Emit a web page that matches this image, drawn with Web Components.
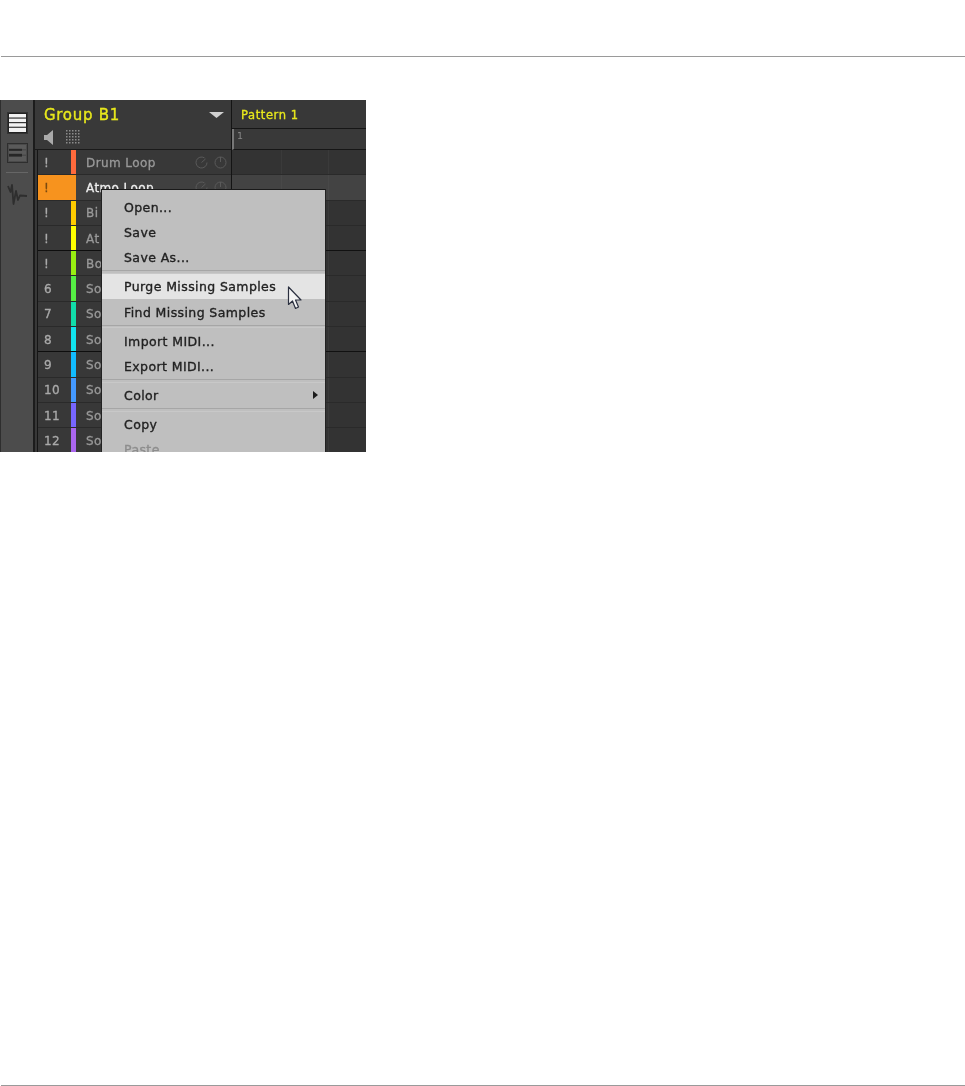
<!DOCTYPE html>
<html lang="en"><head><meta charset="utf-8"><title>Sound context menu</title>
<style>
html,body{margin:0;height:100%;background:#fff}
body{height:1086px;display:flex;flex-direction:column;overflow:hidden;font-family:"DejaVu Sans","Liberation Sans",sans-serif}
doc-rule.top{margin-top:56px}
app-window{margin-top:43px}
doc-rule.bottom{margin-top:auto;margin-bottom:0}
</style></head><body>
<doc-rule class="top"></doc-rule>
<app-window></app-window>
<doc-rule class="bottom"></doc-rule>
<template id="t-window">
<style>
:host{display:flex;width:366px;height:352px;overflow:hidden;position:relative;background:#333;flex:none;filter:blur(.35px)}
.rail{flex:none;background:#4c4c4c;border-left:1px solid #2e2e2e;border-right:2px solid #1c1c1c;display:flex;flex-direction:column;align-items:center;width:32px}
.rail svg{display:block}
.rail .i1{margin-top:12px}.rail .i2{margin-top:9px}
.rail hr{width:22px;height:1px;border:0;background:#666;margin:9px 0 10px}
.list{width:196px;flex:none;background:#383838;border-right:1px solid #141414;display:flex;flex-direction:column}
.lhead{height:49px;flex:none;display:flex;flex-direction:column;background:#393939;border-bottom:1px solid #1a1a1a}
.title{height:27px;display:flex;align-items:center;justify-content:space-between;padding:3px 7px 0 9px;box-sizing:border-box;color:#e8e81c;font-size:15px;letter-spacing:.7px;-webkit-text-stroke:.35px #e8e81c}
.title svg{margin-top:-1px}
.tools{display:flex;align-items:center;gap:12px;padding-left:9px;height:20px}
.rows{display:flex;flex-direction:column;margin-left:2px;border-left:1px solid #161616}
.pat{flex:1;min-width:0;display:flex;flex-direction:column;background:#333}
.tab{height:29px;flex:none;background:#383838;border-bottom:1px solid #161616;box-sizing:border-box;color:#e8e81c;font-size:11.500px;letter-spacing:.6px;-webkit-text-stroke:.3px #e8e81c;display:flex;align-items:center;padding:2px 0 0 9px}
.ruler{height:21px;flex:none;background:#393939;border-bottom:1px solid #161616;border-left:2px solid #777;box-sizing:border-box;color:#888;font-size:9.500px;padding:0 0 0 3px;line-height:14px}
.lanes{display:flex;flex-direction:column}
</style>
<div class="rail">
<svg class="i1" width="21" height="22" viewBox="0 0 21 22"><rect x=".5" y=".5" width="20" height="21" fill="#222" stroke="#333"/><g fill="#f2f2f2"><rect x="2" y="2" width="17" height="3.500"/><rect x="2" y="6.600" width="17" height="3.500"/><rect x="2" y="11.200" width="17" height="3.500"/><rect x="2" y="15.800" width="17" height="4.200"/></g></svg>
<svg class="i2" width="21" height="20" viewBox="0 0 21 20"><rect x=".5" y=".5" width="20" height="19" fill="#4a4a4a" stroke="#2e2e2e"/><g fill="#5a5a5a"><rect x="2" y="2" width="17" height="4"/><rect x="2" y="7.500" width="17" height="4"/><rect x="2" y="13" width="17" height="5"/></g><rect x="2" y="5.800" width="13" height="2" fill="#262626"/><rect x="2" y="10.800" width="13" height="2.800" fill="#262626"/></svg>
<hr>
<svg width="21" height="23" viewBox="0 0 21 23"><path d="M1 3 3.500 9 5 2 6.500 21 9 8 11 17 13 12.500 20 13" fill="none" stroke="#2e2e2e" stroke-width="1.800" stroke-linejoin="round"/></svg>
</div>
<div class="list">
<div class="lhead">
<div class="title"><span>Group B1</span><svg width="15" height="6" viewBox="0 0 15 6"><path d="M0 0H15L7.500 6Z" fill="#d0d0d0"/></svg></div>
<div class="tools">
<svg width="10" height="15" viewBox="0 0 10 15"><path d="M0 5H3L9 0V15L3 10H0Z" fill="#aaa"/></svg>
<svg width="14" height="14" viewBox="0 0 14 14" fill="#8c8c8c"><g><rect x="0" y="0" width="1.500" height="1.500"/><rect x="3" y="0" width="1.500" height="1.500"/><rect x="6" y="0" width="1.500" height="1.500"/><rect x="9" y="0" width="1.500" height="1.500"/><rect x="12" y="0" width="1.500" height="1.500"/></g><g transform="translate(0,3)"><rect x="0" width="1.500" height="1.500"/><rect x="3" width="1.500" height="1.500"/><rect x="6" width="1.500" height="1.500"/><rect x="9" width="1.500" height="1.500"/><rect x="12" width="1.500" height="1.500"/></g><g transform="translate(0,6)"><rect x="0" width="1.500" height="1.500"/><rect x="3" width="1.500" height="1.500"/><rect x="6" width="1.500" height="1.500"/><rect x="9" width="1.500" height="1.500"/><rect x="12" width="1.500" height="1.500"/></g><g transform="translate(0,9)"><rect x="0" width="1.500" height="1.500"/><rect x="3" width="1.500" height="1.500"/><rect x="6" width="1.500" height="1.500"/><rect x="9" width="1.500" height="1.500"/><rect x="12" width="1.500" height="1.500"/></g><g transform="translate(0,12)"><rect x="0" width="1.500" height="1.500"/><rect x="3" width="1.500" height="1.500"/><rect x="6" width="1.500" height="1.500"/><rect x="9" width="1.500" height="1.500"/><rect x="12" width="1.500" height="1.500"/></g></svg>
</div>
</div>
<div class="rows" id="rows"></div>
</div>
<div class="pat">
<div class="tab">Pattern 1</div>
<div class="ruler">1</div>
<div class="lanes" id="lanes"></div>
</div>
<sound-menu></sound-menu>
</template>
<template id="t-row">
<style>
:host{display:flex;height:25.300px;box-sizing:border-box;border-bottom:1px solid #2a2a2a;background:#383838;color:#999;font-size:12px;letter-spacing:.4px;-webkit-text-stroke:.3px #999;flex:none}
:host([end]){border-bottom-color:#0e0e0e}
.pad{width:33px;flex:none;padding:1px 0 0 6px;box-sizing:border-box;display:flex;align-items:center;color:#aaa;-webkit-text-stroke-color:#aaa}
.strip{width:5px;flex:none;background:var(--c)}
.name{flex:1;padding:1px 0 0 10px;display:flex;align-items:center;white-space:nowrap;overflow:hidden}
.knobs{display:flex;gap:6px;padding-right:4px;align-items:center}
:host([sel]) .pad,:host([sel]) .strip{background:#f7931e;color:#7a4a10;-webkit-text-stroke-color:#7a4a10}
:host([sel]){background:#404040}
:host([sel]) .name{color:#eee;-webkit-text-stroke-color:#eee}
</style>
<div class="pad"><slot name="pad"></slot></div><div class="strip"></div><div class="name"><slot></slot></div>
<div class="knobs"><svg width="13" height="13" viewBox="0 0 13 13" fill="none" stroke="#5a5a5a"><path d="M9.500 1.900A5.500 5.500 0 1 0 12 6.500"/><path d="M6.500 6.500 10.500 3"/></svg><svg width="13" height="13" viewBox="0 0 13 13" fill="none" stroke="#5a5a5a"><circle cx="6.500" cy="6.500" r="5.500"/><path d="M6.500 1V6"/></svg></div>
</template>
<template id="t-lane">
<style>
:host{display:grid;grid-template-columns:50px 47px 1fr;height:25.300px;box-sizing:border-box;border-bottom:1px solid #2a2a2a;background:#333;flex:none}
:host([end]){border-bottom-color:#111}
:host([sel]){background:#434343}
i{border-right:1px solid #3a3a3a}
:host([sel]) i{border-right-color:#484848}
i:last-child{border:0}
</style><i></i><i></i><i></i>
</template>
<template id="t-menu">
<style>
:host{position:absolute;left:101px;top:89px;width:225px;height:280px;background:#bfbfbf;border-top:1px solid #1a1a1a;border-left:1px solid #222;border-right:1px solid #222;box-sizing:border-box;padding-top:4.500px;display:flex;flex-direction:column;color:#222;-webkit-text-stroke:.35px #222;font-size:12.500px;letter-spacing:.4px}
.sep{height:3.700px;flex:none;box-sizing:border-box;border-top:1px solid #a6a6a6;border-bottom:1px solid #c8c8c8}
.cursor{position:absolute;left:185px;top:96px}
</style>
<menu-item>Open...</menu-item><menu-item>Save</menu-item><menu-item>Save As...</menu-item>
<div class="sep"></div>
<menu-item hot>Purge Missing Samples</menu-item><menu-item>Find Missing Samples</menu-item>
<div class="sep"></div>
<menu-item>Import MIDI...</menu-item><menu-item>Export MIDI...</menu-item>
<div class="sep"></div>
<menu-item sub>Color</menu-item>
<div class="sep"></div>
<menu-item>Copy</menu-item><menu-item off>Paste</menu-item>
<svg class="cursor" width="17" height="24" viewBox="0 0 17 24"><path d="M1.500 1V18.500L5.500 15 8.500 22.500 11.500 21 8.500 14H14Z" fill="#f4f4f4" stroke="#2b3040" stroke-width="1.200" stroke-linejoin="round"/></svg>
</template>
<template id="t-item">
<style>
:host{display:flex;height:25.300px;flex:none;align-items:center;justify-content:space-between;padding:0 7px 0 22px;box-sizing:border-box}
:host([hot]){background:#e4e4e4}
:host([off]){color:#8d8d8d;-webkit-text-stroke-color:#8d8d8d}
svg{display:none}:host([sub]) svg{display:block}
</style><slot></slot><svg width="5" height="8" viewBox="0 0 5 8"><path d="M0 0 5 4 0 8Z" fill="#1c1c1c"/></svg>
</template>
<script>
function def(tag,tpl){customElements.define(tag,class extends HTMLElement{constructor(){super();this.attachShadow({mode:'open'}).appendChild(document.getElementById(tpl).content.cloneNode(true));}});}
customElements.define('doc-rule',class extends HTMLElement{constructor(){super();this.attachShadow({mode:'open'}).innerHTML='<style>:host{display:block;height:1px;margin-left:1px;background:#9a9a9a;flex:none}</style>';}});
def('menu-item','t-item');def('sound-menu','t-menu');def('sound-row','t-row');def('lane-row','t-lane');
const data=[['!','Drum Loop','#ff6a3c'],['!','Atmo Loop','#f7931e'],['!','Bi','#ffcc00'],['!','At','#ffff00'],['!','Bo','#99ee11'],['6','So','#55ee44'],['7','So','#11ddaa'],['8','So','#11e4ee'],['9','So','#11bbff'],['10','So','#4499ff'],['11','So','#7766ff'],['12','So','#aa66ee']];
customElements.define('app-window',class extends HTMLElement{constructor(){super();const s=this.attachShadow({mode:'open'});s.appendChild(document.getElementById('t-window').content.cloneNode(true));
const rows=s.getElementById('rows'),lanes=s.getElementById('lanes');
data.forEach((d,i)=>{const r=document.createElement('sound-row');r.style.setProperty('--c',d[2]);const p=document.createElement('span');p.slot='pad';p.textContent=d[0];r.append(p,d[1]);const l=document.createElement('lane-row');if(i==1){r.setAttribute('sel','');l.setAttribute('sel','');}if(i%4==3){r.setAttribute('end','');l.setAttribute('end','');}rows.append(r);lanes.append(l);});}});
</script>
</body></html>
